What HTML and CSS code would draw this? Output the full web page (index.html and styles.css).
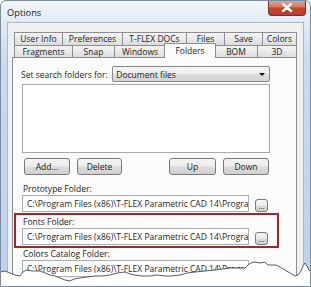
FILE: index.html
```html
<!DOCTYPE html>
<html lang="en">
<head>
  <meta charset="UTF-8">
  <title>Options</title>
  <link rel="stylesheet" href="styles.css">
</head>
<body>
  <div class="window">
    <div class="titlebar">
      <span class="title">Options</span>
      <div class="close">
        <svg width="12" height="9" viewBox="0 0 12 9">
          <path d="M2 1 L10 8 M10 1 L2 8" stroke="#fff" stroke-width="2.4" stroke-linecap="round"/>
        </svg>
      </div>
    </div>

    <div class="client">
      <div class="tabs">
        <div class="tabrow back">
          <div class="tab">User Info</div>
          <div class="tab">Preferences</div>
          <div class="tab">T-FLEX DOCs</div>
          <div class="tab">Files</div>
          <div class="tab">Save</div>
          <div class="tab">Colors</div>
        </div>
        <div class="tabrow front">
          <div class="tab">Fragments</div>
          <div class="tab">Snap</div>
          <div class="tab">Windows</div>
          <div class="tab active">Folders</div>
          <div class="tab">BOM</div>
          <div class="tab">3D</div>
        </div>
      </div>

      <div class="panel">
        <div class="search-row">
          <span class="search-label">Set search folders for:</span>
          <div class="combo">
            <span>Document files</span>
            <span class="arrow"></span>
          </div>
        </div>

        <div class="list"></div>

        <div class="buttons">
          <button class="btn btn-add">Add...</button>
          <button class="btn btn-delete">Delete</button>
          <button class="btn btn-up">Up</button>
          <button class="btn btn-down">Down</button>
        </div>

        <div class="folder">
          <div class="folder-label">Prototype Folder:</div>
          <div class="folder-row">
            <div class="path">C:\Program Files (x86)\T-FLEX Parametric CAD 14\Program</div>
            <button class="browse">...</button>
          </div>
        </div>

        <div class="folder highlight">
          <div class="folder-label">Fonts Folder:</div>
          <div class="folder-row">
            <div class="path">C:\Program Files (x86)\T-FLEX Parametric CAD 14\Program</div>
            <button class="browse">...</button>
          </div>
        </div>

        <div class="folder">
          <div class="folder-label">Colors Catalog Folder:</div>
          <div class="folder-row">
            <div class="path">C:\Program Files (x86)\T-FLEX Parametric CAD 14\Program</div>
            <button class="browse">...</button>
          </div>
        </div>
      </div>
    </div>

    <!-- torn paper edge over the bottom of the dialog -->
    <svg class="torn" width="313" height="48" viewBox="0 240 313 48">
      <path d="M0 272 L5 271 L10 273 L15 275 L20 276 L23 272 L26 270 L32 271 L40 271 L45 273 L50 275 L55 276 L60 278 L65 280 L70 281 L74 279 L80 278 L87 277 L95 276 L102 276 L110 275 L117 273 L125 272 L130 274 L135 275 L142 276 L150 276 L157 275 L165 276 L172 276 L180 275 L187 273 L195 272 L205 271 L215 270 L222 269 L230 268 L238 268 L245 268 L248 265 L251 263 L255 262 L260 263 L265 262 L268 265 L272 265 L276 265 L280 267 L285 270 L290 273 L295 276 L298 275 L301 271 L303 266 L305 263 L307 266 L309 270 L313 274 L313 290 L0 290 Z" fill="#fff" stroke="none"/>
      <path d="M0 272 L5 271 L10 273 L15 275 L20 276 L23 272 L26 270 L32 271 L40 271 L45 273 L50 275 L55 276 L60 278 L65 280 L70 281 L74 279 L80 278 L87 277 L95 276 L102 276 L110 275 L117 273 L125 272 L130 274 L135 275 L142 276 L150 276 L157 275 L165 276 L172 276 L180 275 L187 273 L195 272 L205 271 L215 270 L222 269 L230 268 L238 268 L245 268 L248 265 L251 263 L255 262 L260 263 L265 262 L268 265 L272 265 L276 265 L280 267 L285 270 L290 273 L295 276 L298 275 L301 271 L303 266 L305 263 L307 266 L309 270 L313 274" fill="none" stroke="#4a4a4a" stroke-width="0.9"/>
    </svg>
  </div>
</body>
</html>
```

FILE: styles.css
```css
html, body {
  margin: 0;
  padding: 0;
  background: #fff;
}

body {
  font-family: "Open Sans", "Noto Sans", sans-serif;
  font-size: 8.5px;
  color: #1e1e1e;
}

.window {
  position: relative;
  width: 311px;
  height: 287px;
  box-sizing: border-box;
  border: 1px solid #7b8ba0;
  border-radius: 6px 6px 0 0;
  background: linear-gradient(to bottom, #f1f5fa 0, #e2ebf5 21px, #c9dbef 60px, #bcd2eb 100%);
  overflow: hidden;
}

.titlebar {
  display: flex;
  align-items: flex-start;
  height: 21px;
}

.title {
  font-size: 9.3px;
  color: #202020;
  margin: 5px 0 0 6px;
}

.close {
  margin-left: auto;
  margin-right: 4px;
  margin-top: -1px;
  width: 38px;
  height: 16px;
  box-sizing: border-box;
  border: 1px solid #7d3027;
  border-top: none;
  border-radius: 0 0 4px 4px;
  background: linear-gradient(to bottom, #e9a99a 0, #d77461 45%, #c24631 55%, #b5412f 100%);
  display: flex;
  align-items: center;
  justify-content: center;
}

.client {
  margin: 0 6px 0 6px;
  height: 270px;
  background: #f0f0f0;
  border: 1px solid #a9b8c9;
  border-bottom: none;
  padding: 9px 6px 0 4px;
}

.tabs {
  margin-left: 2px;
  margin-right: 1px;
}

.tabrow {
  display: grid;
}

.tabrow.back {
  grid-template-columns: 48px 60px 64px 38px 38px 34px;
  height: 13px;
}

.tabrow.front {
  grid-template-columns: 58px 42px 51px 49px 43px 39px;
  height: 12px;
}

.tab {
  box-sizing: border-box;
  border: 1px solid #8c8e94;
  border-bottom: none;
  margin-right: -1px;
  background: linear-gradient(to bottom, #f4f4f4 0, #e9e9e9 50%, #dcdcdc 100%);
  text-align: center;
  line-height: 11px;
  white-space: nowrap;
  overflow: hidden;
}

.tab.active {
  position: relative;
  background: #fbfbfb;
  margin: -2px -2px -1px -1px;
  line-height: 13px;
  z-index: 1;
}

.panel {
  height: 230px;
  box-sizing: border-box;
  border: 1px solid #8c8e94;
  background: #fbfbfb;
  padding: 8px 26px 0 9px;
}

.search-row {
  display: flex;
  align-items: center;
  height: 16px;
}

.search-label {
  width: 92px;
  margin-left: -1px;
}

.combo {
  display: flex;
  align-items: center;
  width: 159px;
  height: 16px;
  box-sizing: border-box;
  padding: 0 4px 0 3px;
  border: 1px solid #8a8a8a;
  border-radius: 2px;
  background: linear-gradient(to bottom, #f6f6f6 0, #ececec 50%, #dedede 51%, #d4d4d4 100%);
}

.arrow {
  margin-left: auto;
  width: 0;
  height: 0;
  border-left: 3px solid transparent;
  border-right: 3px solid transparent;
  border-top: 3px solid #111;
}

.list {
  margin-top: 2px;
  width: 248px;
  height: 69px;
  box-sizing: border-box;
  border: 1px solid #a5a9b0;
  background: #fff;
}

.buttons {
  display: flex;
  gap: 7px;
  margin-top: 5px;
  width: 248px;
  padding-left: 2px;
  box-sizing: border-box;
}

.btn, .browse {
  font-family: inherit;
  font-size: 8.5px;
  color: #1e1e1e;
  box-sizing: border-box;
  border: 1px solid #7a7a7a;
  border-radius: 3px;
  background: linear-gradient(to bottom, #f4f4f4 0, #ececec 48%, #dcdcdc 52%, #d0d0d0 100%);
  padding: 0;
  margin: 0;
}

.btn {
  height: 17px;
}

.btn-add { width: 46px; }
.btn-delete { width: 45px; }
.btn-up { width: 47px; margin-left: auto; }
.btn-down { width: 46px; margin-right: 1px; }

.folder-label {
  height: 12px;
  line-height: 12px;
  padding-left: 1px;
}

.buttons + .folder {
  margin-top: 8px;
}

.folder-row {
  display: flex;
  align-items: flex-end;
  gap: 6px;
  width: 246px;
}

.path {
  width: 227px;
  height: 17px;
  box-sizing: border-box;
  border: 1px solid #abadb3;
  background: #fff;
  padding-left: 4px;
  line-height: 15px;
  white-space: nowrap;
  overflow: hidden;
}

.browse {
  width: 13px;
  height: 13px;
  line-height: 8px;
  font-size: 8px;
}

.highlight {
  margin: 1px 0 0 -8px;
  padding: 1px 9px 1px 6px;
  width: 246px;
  border: 2px solid #a8222c;
}

.torn {
  position: absolute;
  left: -1px;
  top: 239px;
}
```
